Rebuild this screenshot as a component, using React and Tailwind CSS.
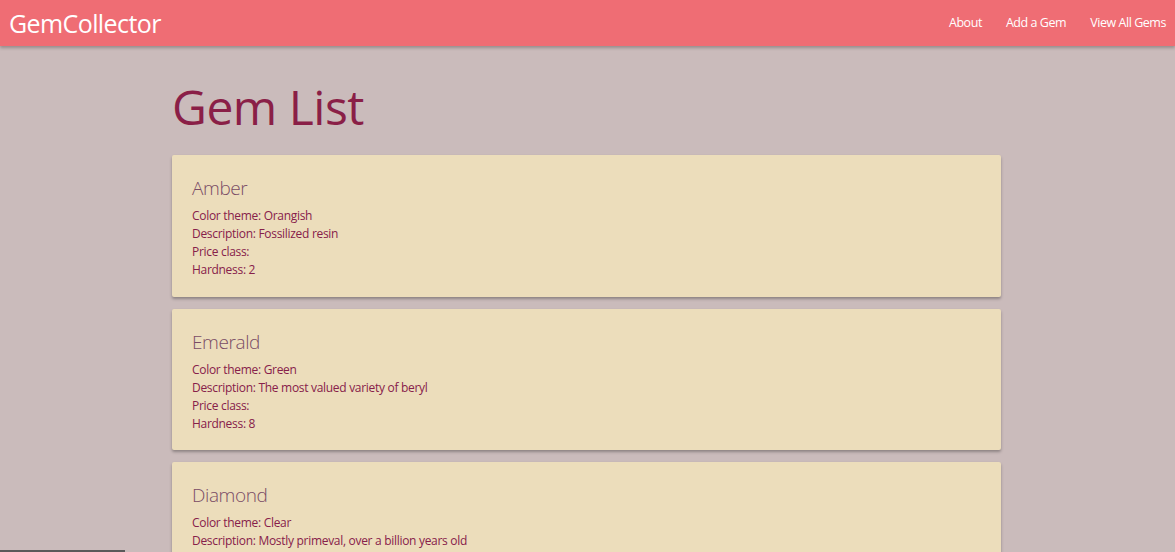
const gems = [
  { name: 'Amber', color: 'Orangish', description: 'Fossilized resin', price: '', hardness: 2 },
  { name: 'Emerald', color: 'Green', description: 'The most valued variety of beryl', price: '', hardness: 8 },
  { name: 'Diamond', color: 'Clear', description: 'Mostly primeval, over a billion years old', price: '', hardness: 10 },
];

function Nav() {
  return (
    <nav className="flex h-[46px] items-center justify-between bg-[#ef6d74] pl-[9px] pr-[9px] text-white shadow-[0_2px_3px_rgba(0,0,0,0.25)]">
      <a className="text-[25px] leading-none tracking-[-0.6px]">GemCollector</a>
      <ul className="flex items-center gap-[24px] text-[12.5px] tracking-[-0.45px]">
        <li>About</li>
        <li>Add a Gem</li>
        <li>View All Gems</li>
      </ul>
    </nav>
  );
}

function GemCard({ gem }) {
  return (
    <div className="mb-[12px] h-[141.5px] rounded-[2px] bg-[#ecddbb] px-[20px] pt-[20px] shadow-[0_2px_3px_rgba(0,0,0,0.3)]">
      <span className="block text-[19px] font-light leading-[26px] tracking-[-0.4px] text-[#7a4c66]">{gem.name}</span>
      <div className="mt-[6px] text-[12px] leading-[18px] tracking-[-0.3px] text-[#87204a]">
        <p>Color theme: {gem.color}</p>
        <p>Description: {gem.description}</p>
        <p>Price class: {gem.price}</p>
        <p>Hardness: {gem.hardness}</p>
      </div>
    </div>
  );
}

export default function App() {
  return (
    <div className="min-h-[552px] bg-[#cabbbb] font-['Open_Sans',sans-serif]">
      <Nav />
      <main className="ml-[172px] w-[829px] pt-[34px]">
        <h1 className="mb-[21px] text-[48px] leading-[54px] tracking-[-0.5px] text-[#8a1f47]">Gem List</h1>
        {gems.map((gem) => (
          <GemCard key={gem.name} gem={gem} />
        ))}
      </main>
      <div className="fixed bottom-0 left-0 h-[2px] w-[125px] bg-[#5a5a5a]" />
    </div>
  );
}
